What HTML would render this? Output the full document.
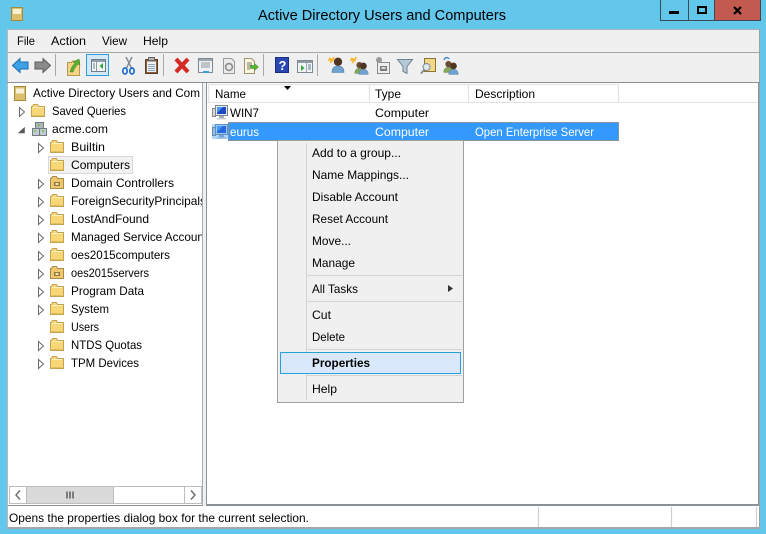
<!DOCTYPE html>
<html><head><meta charset="utf-8"><title>Active Directory Users and Computers</title>
<style>
html,body{margin:0;padding:0;background:#63c7ec;width:766px;height:534px;overflow:hidden}
svg{display:block}
text{font-family:"Liberation Sans",sans-serif;font-size:12px;fill:#000}
</style></head><body>
<svg width="766" height="534" viewBox="0 0 766 534" xmlns="http://www.w3.org/2000/svg">
<defs>
<symbol id="folder" viewBox="0 0 14 13" width="14" height="13" overflow="visible">
<path d="M.5 12.500V2.500h1l1-2h4l1 2h6v10z" fill="#f8d778" stroke="#c4a24e"/>
<path d="M1.500 3.500h11" stroke="#fdf0c0" fill="none"/>
<path d="M1.500 11.500h11" stroke="#e8bd5c" fill="none"/>
</symbol>
<symbol id="ofolder" viewBox="0 0 14 13" width="14" height="13" overflow="visible">
<path d="M.5 12.500V2.500h1l1-2h4l1 2h6v10z" fill="#edc870" stroke="#a98c44"/>
<rect x="4" y="6" width="6" height="4" fill="#94793a"/><rect x="5.500" y="7" width="3" height="2" fill="#f2e6b0"/>
</symbol>
<symbol id="tri" viewBox="0 0 6 10" width="6" height="10" overflow="visible">
<path d="M.5.5l5 4.500-5 4.500z" fill="#fff" stroke="#6b6b6b"/>
</symbol>
<symbol id="pc" viewBox="0 0 16 15" width="16" height="15" overflow="visible">
<rect x="0.500" y="3.500" width="3" height="8" fill="#d8d8d8" stroke="#888"/>
<rect x="3.500" y="0.500" width="12" height="10" fill="#e4e9ee" stroke="#7f8890"/>
<rect x="5" y="2" width="9" height="7" fill="#1f48c8"/><path d="M5 2h6L5 8z" fill="#4a9cf0"/>
<rect x="7" y="11" width="5" height="2" fill="#a7afb6"/><rect x="5" y="13" width="9" height="1.500" fill="#ccd1d6"/>
</symbol>
<symbol id="person" viewBox="0 0 14 16" width="14" height="16" overflow="visible">
<path d="M1 15.500c0-4 2-6.500 6-6.500s6 2.500 6 6.500z" fill="#6fa3cf" stroke="#4a7ba6" stroke-width=".6"/>
<circle cx="7" cy="4.800" r="4.200" fill="#4f3524"/>
</symbol>
<symbol id="personG" viewBox="0 0 14 16" width="14" height="16" overflow="visible">
<path d="M1 15.500c0-4 2-6.500 6-6.500s6 2.500 6 6.500z" fill="#88a85a" stroke="#5f7f3c" stroke-width=".6"/>
<circle cx="7" cy="5" r="4" fill="#6a4c32"/>
</symbol>
<clipPath id="treeClip"><rect x="9" y="84" width="193" height="400"/></clipPath>
</defs>

<rect width="766" height="534" fill="#63c7ec"/>

<!-- title bar -->
<rect x="11.500" y="7.500" width="11" height="13" fill="#dcc06c" stroke="#a5893c"/>
<rect x="13" y="9" width="8" height="5" fill="#f7f1d8"/>
<text x="258" y="20" textLength="248" lengthAdjust="spacingAndGlyphs" style="font-size:15px">Active Directory Users and Computers</text>

<rect x="660.500" y="-1" width="100" height="21.500" fill="#63c7ec" stroke="#3c4a56"/>
<rect x="714.500" y="0" width="45.500" height="20" fill="#c25a50"/>
<path d="M688.500 0v20M714.500 0v20" stroke="#3c4a56"/>
<rect x="669" y="11" width="10" height="3" fill="#000"/>
<rect x="698" y="7" width="8" height="6" fill="none" stroke="#000" stroke-width="2"/>
<path d="M734 7l7 7M741 7l-7 7" stroke="#000" stroke-width="2.200"/>

<!-- client -->
<rect x="7" y="29" width="753" height="499" fill="#f0f0f0"/>
<rect x="7" y="29" width="753" height="1" fill="#a9b4ba"/>
<rect x="7" y="29" width="1" height="499" fill="#b4bcc0"/>
<rect x="759" y="29" width="1" height="499" fill="#9aa2a8"/>
<rect x="7" y="527" width="753" height="2" fill="#a0a8ad"/>

<text x="17" y="45" textLength="18" lengthAdjust="spacingAndGlyphs">File</text>
<text x="51" y="45" textLength="35" lengthAdjust="spacingAndGlyphs">Action</text>
<text x="102" y="45" textLength="25" lengthAdjust="spacingAndGlyphs">View</text>
<text x="143" y="45" textLength="25" lengthAdjust="spacingAndGlyphs">Help</text>
<rect x="8" y="52" width="751" height="1" fill="#a5a5a5"/>

<!-- toolbar -->
<path d="M12.500 65.500l7.500-7v3.500h8v7h-8v3.500z" fill="#3fa2e6" stroke="#1b6cb0"/>
<path d="M50.500 65.500l-7.500-7v3.500h-8v7h8v3.500z" fill="#8a8a8a" stroke="#5a5a5a"/>
<rect x="55" y="54" width="1" height="22" fill="#a8a8a8"/>
<path d="M67.500 75.500V62.500h4l1-1.500h7v14.500z" fill="#f5d486" stroke="#b8974f"/>
<path d="M70 72c1-4 3-7 5-9l-2-1 6-3 1 6-2-1c-2 2-4 5-5 8z" fill="#57b02f" stroke="#3a8420" stroke-width=".5"/>
<rect x="86.500" y="54.500" width="22" height="21" fill="#d5e8f8" stroke="#2b9ee0"/>
<rect x="91.500" y="59.500" width="14" height="12" fill="#f3f5f7" stroke="#6e7d8a"/>
<rect x="92" y="60" width="13" height="2" fill="#8ea0ae"/>
<path d="M96.500 62v9" stroke="#8a9aa6"/>
<path d="M93 64h2M93 66h2M93 68h2" stroke="#6e7d8a"/>
<path d="M103 63v6l-3.500-3z" fill="#2ea83c"/>
<path d="M132 57l-6 12M126 57l6 12" stroke="#7f8b93" stroke-width="1.400"/>
<ellipse cx="125" cy="71" rx="2.200" ry="3" fill="none" stroke="#1d6fd0" stroke-width="1.700"/>
<ellipse cx="132" cy="71" rx="2.200" ry="3" fill="none" stroke="#1d6fd0" stroke-width="1.700"/>
<rect x="145.500" y="59.500" width="12" height="14" fill="#8a5e3a" stroke="#5a3f28"/>
<rect x="147" y="61.500" width="9" height="10.500" fill="#eef3f7"/>
<path d="M148 64.500h7M148 66.500h7M148 68.500h7M148 70.500h7" stroke="#8ba4bc"/>
<rect x="148.500" y="57.500" width="6" height="3" fill="#b4b4b4" stroke="#666"/>
<rect x="163" y="54" width="1" height="22" fill="#a8a8a8"/>
<path d="M176 59l12 13M188 59l-12 13" stroke="#d62b25" stroke-width="4.200"/>
<rect x="198.500" y="58.500" width="14" height="14" fill="#eef0f2" stroke="#7d8890"/>
<rect x="199" y="59" width="13" height="2" fill="#9aa7b1"/>
<path d="M201 63h9M201 65h9M201 67h9" stroke="#8d99a2"/>
<rect x="203" y="71" width="6" height="2" fill="#3aa0e0"/>
<path d="M223.500 58.500h8l3 3v12h-11z" fill="#eaeaea" stroke="#9a9a9a"/>
<circle cx="229" cy="67" r="3.400" fill="none" stroke="#8b8b8b" stroke-width="1.600"/>
<path d="M244.500 58.500h7l3 3v12h-10z" fill="#fbf6dc" stroke="#9a9472"/>
<path d="M247 63h5M247 65h5M247 67h5M247 69h3" stroke="#777"/>
<path d="M258.500 67l-4-3.500v2h-4v3h4v2z" fill="#55b52f" stroke="#3a8420" stroke-width=".5"/>
<rect x="263" y="54" width="1" height="22" fill="#a8a8a8"/>
<rect x="275.500" y="57.500" width="13" height="15" fill="#2a46b0" stroke="#18307f"/>
<text x="278.500" y="70" style="font-size:13px;font-weight:bold;fill:#fff">?</text>
<rect x="297.500" y="60.500" width="15" height="12" fill="#f2f4f5" stroke="#7d8890"/>
<rect x="298" y="61" width="14" height="2" fill="#8e9ba4"/>
<path d="M301 65v6l3.500-3z" fill="#2ea83c"/>
<path d="M306.500 63v9" stroke="#9aa5ad"/>
<path d="M308 65h3M308 67h3M308 69h3" stroke="#5f7f9f"/>
<rect x="317" y="54" width="1" height="22" fill="#a8a8a8"/>
<use href="#person" x="331" y="57"/>
<path d="M333 60l-4-2M333 60l-3 3M333 60l1-3M333 60h-5" stroke="#f7b21d" stroke-width="1.500"/>
<use href="#personG" x="354" y="61" width="11" height="13"/>
<use href="#person" x="358" y="62" width="11" height="13"/>
<path d="M355 60l-4-2M355 60l-3 3M355 60l1-3M355 60h-5" stroke="#f7b21d" stroke-width="1.500"/>
<rect x="377.500" y="62.500" width="12" height="11" fill="#eceded" stroke="#8a8a8a"/>
<rect x="380" y="66" width="7" height="5" fill="#7a7a7a"/><rect x="381.500" y="67" width="4" height="2" fill="#ddd"/>
<circle cx="379" cy="60" r="3" fill="#9a9a9a"/>
<path d="M397.500 59.500h15l-5.500 7v7l-4-2v-5z" fill="#b5c9d6" stroke="#6e8391"/>
<rect x="424.500" y="58.500" width="11" height="13" fill="#f2d98a" stroke="#8e7434"/>
<circle cx="426.500" cy="67" r="3.500" fill="#dce8ee" stroke="#7a8a92"/>
<path d="M424 70l-3 3.500" stroke="#7a7a7a" stroke-width="1.600"/>
<use href="#personG" x="443" y="60" width="11" height="13"/>
<use href="#person" x="448" y="62" width="11" height="13"/>
<path d="M444 60c1-3 4-3 5-1" stroke="#2a7fd0" fill="none" stroke-width="1.300"/>
<rect x="7" y="82" width="753" height="1" fill="#8a9298"/>

<!-- left pane -->
<rect x="8" y="83" width="195" height="423" fill="#fff"/>
<rect x="202" y="83" width="1" height="423" fill="#a8aeb2"/>
<rect x="8" y="505" width="195" height="1" fill="#8a9298"/>
<!-- right pane -->
<rect x="206" y="83" width="553" height="423" fill="#fff"/>
<rect x="206" y="83" width="1" height="423" fill="#8a9298"/>
<rect x="206" y="504" width="553" height="2" fill="#8a9298"/>
<rect x="758" y="83" width="1" height="423" fill="#8a9298"/>

<!-- tree -->
<rect x="14.500" y="86.500" width="11" height="14" fill="#dcc06c" stroke="#a5893c"/>
<rect x="16" y="88.500" width="8" height="5" fill="#f7f1d8"/>
<rect x="48.500" y="156.500" width="84" height="17" fill="#f2f2f2" stroke="#d9d9d9"/>
<g clip-path="url(#treeClip)">
<text x="33" y="97" textLength="167" lengthAdjust="spacingAndGlyphs">Active Directory Users and Com</text>
<text x="52" y="115" textLength="74" lengthAdjust="spacingAndGlyphs">Saved Queries</text>
<text x="52" y="133" textLength="56" lengthAdjust="spacingAndGlyphs">acme.com</text>
<text x="71" y="151" textLength="34" lengthAdjust="spacingAndGlyphs">Builtin</text>
<text x="71" y="169" textLength="59" lengthAdjust="spacingAndGlyphs">Computers</text>
<text x="71" y="187" textLength="103" lengthAdjust="spacingAndGlyphs">Domain Controllers</text>
<text x="71" y="205" textLength="135" lengthAdjust="spacingAndGlyphs">ForeignSecurityPrincipals</text>
<text x="71" y="223" textLength="78" lengthAdjust="spacingAndGlyphs">LostAndFound</text>
<text x="71" y="241" textLength="142" lengthAdjust="spacingAndGlyphs">Managed Service Accounts</text>
<text x="71" y="259" textLength="99" lengthAdjust="spacingAndGlyphs">oes2015computers</text>
<text x="71" y="277" textLength="78" lengthAdjust="spacingAndGlyphs">oes2015servers</text>
<text x="71" y="295" textLength="73" lengthAdjust="spacingAndGlyphs">Program Data</text>
<text x="71" y="313" textLength="38" lengthAdjust="spacingAndGlyphs">System</text>
<text x="71" y="331" textLength="28" lengthAdjust="spacingAndGlyphs">Users</text>
<text x="71" y="349" textLength="71" lengthAdjust="spacingAndGlyphs">NTDS Quotas</text>
<text x="71" y="367" textLength="68" lengthAdjust="spacingAndGlyphs">TPM Devices</text>
</g>
<use href="#folder" x="31" y="104"/>
<use href="#tri" x="19" y="107"/>
<path d="M24.500 127.500v5.500h-6z" fill="#595959" stroke="#595959" stroke-width=".6"/>
<!-- domain icon -->
<rect x="35.500" y="122.500" width="8" height="7" fill="#aeb6bc" stroke="#6f7a82"/>
<rect x="32.500" y="128.500" width="7" height="7" fill="#c3cbd0" stroke="#6f7a82"/>
<rect x="39.500" y="128.500" width="7" height="7" fill="#c3cbd0" stroke="#6f7a82"/>
<path d="M34 131h2M42 131h2M38 125h2" stroke="#5dc93a" stroke-width="1.500"/>
<use href="#folder" x="50" y="140"/><use href="#tri" x="38" y="143"/>
<use href="#folder" x="50" y="158"/>
<use href="#ofolder" x="50" y="176"/><use href="#tri" x="38" y="179"/>
<use href="#folder" x="50" y="194"/><use href="#tri" x="38" y="197"/>
<use href="#folder" x="50" y="212"/><use href="#tri" x="38" y="215"/>
<use href="#folder" x="50" y="230"/><use href="#tri" x="38" y="233"/>
<use href="#folder" x="50" y="248"/><use href="#tri" x="38" y="251"/>
<use href="#ofolder" x="50" y="266"/><use href="#tri" x="38" y="269"/>
<use href="#folder" x="50" y="284"/><use href="#tri" x="38" y="287"/>
<use href="#folder" x="50" y="302"/><use href="#tri" x="38" y="305"/>
<use href="#folder" x="50" y="320"/>
<use href="#folder" x="50" y="338"/><use href="#tri" x="38" y="341"/>
<use href="#folder" x="50" y="356"/><use href="#tri" x="38" y="359"/>

<!-- scrollbar -->
<rect x="9.500" y="486.500" width="192" height="17" fill="#fff" stroke="#bdbdbd"/>
<rect x="26.500" y="486.500" width="87" height="17" fill="#dadada" stroke="#bdbdbd"/>
<path d="M184.500 486v18" stroke="#bdbdbd"/>
<path d="M20 490.500l-4 4.500 4 4.500M191 490.500l4 4.500-4 4.500" fill="none" stroke="#6a6a6a" stroke-width="1.400"/>
<path d="M67 491.500v7M70 491.500v7M73 491.500v7" stroke="#555" stroke-width="1.400"/>

<!-- list header -->
<rect x="207" y="84" width="551" height="18" fill="#fff"/>
<path d="M208.500 84v18M369.500 84v18M468.500 84v18M618.500 84v18M208 84.500h411" stroke="#e4e4e4" stroke-width="1.200"/>
<rect x="207" y="102" width="551" height="1" fill="#e2e2e2"/>
<text x="215" y="98" textLength="31" lengthAdjust="spacingAndGlyphs">Name</text>
<text x="375" y="98" textLength="26" lengthAdjust="spacingAndGlyphs">Type</text>
<text x="475" y="98" textLength="60" lengthAdjust="spacingAndGlyphs">Description</text>
<path d="M284 86h7l-3.500 4z" fill="#000"/>

<!-- rows -->
<use href="#pc" x="212" y="105"/>
<text x="230" y="117" textLength="29" lengthAdjust="spacingAndGlyphs">WIN7</text>
<text x="375" y="117" textLength="54" lengthAdjust="spacingAndGlyphs">Computer</text>
<rect x="228" y="122" width="391" height="19" fill="#3399ff"/>
<rect x="228.500" y="122.500" width="390" height="18" fill="none" stroke="#d89440" stroke-dasharray="1 1" shape-rendering="crispEdges"/>
<use href="#pc" x="212" y="124"/>
<rect x="212" y="124" width="16" height="15" fill="#3399ff" opacity=".4"/>
<text x="230" y="136" textLength="29" lengthAdjust="spacingAndGlyphs" style="fill:#fff">eurus</text>
<text x="375" y="136" textLength="54" lengthAdjust="spacingAndGlyphs" style="fill:#fff">Computer</text>
<text x="475" y="136" textLength="119" lengthAdjust="spacingAndGlyphs" style="fill:#fff">Open Enterprise Server</text>

<!-- context menu -->
<rect x="277.500" y="140.500" width="186" height="262" fill="#f0f0f0" stroke="#a0a0a0"/>
<rect x="306" y="143" width="1" height="257" fill="#d4d4d4"/>
<text x="312" y="157" textLength="89" lengthAdjust="spacingAndGlyphs">Add to a group...</text>
<text x="312" y="179" textLength="97" lengthAdjust="spacingAndGlyphs">Name Mappings...</text>
<text x="312" y="201" textLength="86" lengthAdjust="spacingAndGlyphs">Disable Account</text>
<text x="312" y="223" textLength="76" lengthAdjust="spacingAndGlyphs">Reset Account</text>
<text x="312" y="245" textLength="39" lengthAdjust="spacingAndGlyphs">Move...</text>
<text x="312" y="267" textLength="43" lengthAdjust="spacingAndGlyphs">Manage</text>
<rect x="307" y="275" width="155" height="1" fill="#d4d4d4"/>
<text x="312" y="293" textLength="46" lengthAdjust="spacingAndGlyphs">All Tasks</text>
<path d="M448 285l5 3.500-5 3.500z" fill="#333"/>
<rect x="307" y="301" width="155" height="1" fill="#d4d4d4"/>
<text x="312" y="319" textLength="19" lengthAdjust="spacingAndGlyphs">Cut</text>
<text x="312" y="341" textLength="33" lengthAdjust="spacingAndGlyphs">Delete</text>
<rect x="307" y="349" width="155" height="1" fill="#d4d4d4"/>
<rect x="280.500" y="352.500" width="180" height="21" fill="#d9e9fb" stroke="#26a0da"/>
<text x="312" y="367" textLength="58" lengthAdjust="spacingAndGlyphs" style="font-weight:bold">Properties</text>
<rect x="307" y="375" width="155" height="1" fill="#d4d4d4"/>
<text x="312" y="393" textLength="25" lengthAdjust="spacingAndGlyphs">Help</text>

<!-- status bar -->
<rect x="8" y="506" width="751" height="21" fill="#fff"/>
<path d="M538.500 507v20M671.500 507v20M756.500 507v20" stroke="#d0d0d0" stroke-width="1.200"/>
<text x="9" y="522" textLength="300" lengthAdjust="spacingAndGlyphs">Opens the properties dialog box for the current selection.</text>
</svg>
</body></html>
